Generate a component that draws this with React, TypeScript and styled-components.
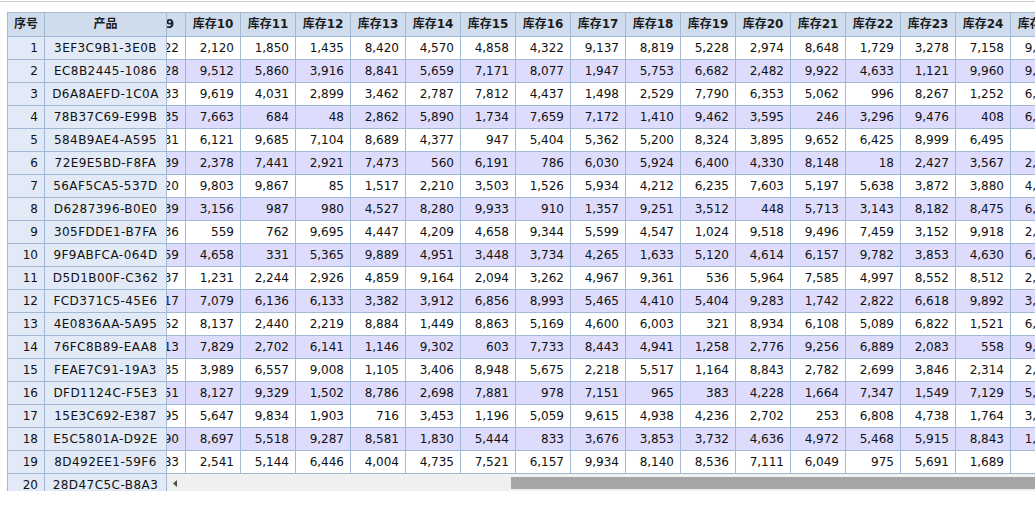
import React, { useLayoutEffect, useRef } from "react";
import styled, { createGlobalStyle } from "styled-components";

const GlobalStyle = createGlobalStyle`
  html, body {
    margin: 0;
    padding: 0;
    background: #ffffff;
    overflow: hidden;
  }
  body {
    font-family: "DejaVu Sans", Verdana, "Noto Sans CJK SC", sans-serif;
    font-size: 12px;
    color: #111;
  }
`;

const BORDER = "#a2b9d6";
const COL_W = 55;
const COL_COUNT = 30;
const SCROLL_LEFT = 476;

const codes = [
  "3EF3C9B1-3E0B", "EC8B2445-1086", "D6A8AEFD-1C0A", "78B37C69-E99B", "584B9AE4-A595",
  "72E9E5BD-F8FA", "56AF5CA5-537D", "D6287396-B0E0", "305FDDE1-B7FA", "9F9ABFCA-064D",
  "D5D1B00F-C362", "FCD371C5-45E6", "4E0836AA-5A95", "76FC8B89-EAA8", "FEAE7C91-19A3",
  "DFD1124C-F5E3", "15E3C692-E387", "E5C5801A-D92E", "8D492EE1-59F6", "28D47C5C-B8A3",
];

// 库存9 tail | 库存10..库存24 | 库存25
const visible = [
  "1,722|2,120 1,850 1,435 8,420 4,570 4,858 4,322 9,137 8,819 5,228 2,974 8,648 1,729 3,278 7,158|9,714",
  "6,328|9,512 5,860 3,916 8,841 5,659 7,171 8,077 1,947 5,753 6,682 2,482 9,922 4,633 1,121 9,960|9,205",
  "4,133|9,619 4,031 2,899 3,462 2,787 7,812 4,437 1,498 2,529 7,790 6,353 5,062 996 8,267 1,252|6,981",
  "2,835|7,663 684 48 2,862 5,890 1,734 7,659 7,172 1,410 9,462 3,595 246 3,296 9,476 408|6,540",
  "8,931|6,121 9,685 7,104 8,689 4,377 947 5,404 5,362 5,200 8,324 3,895 9,652 6,425 8,999 6,495|745",
  "5,039|2,378 7,441 2,921 7,473 560 6,191 786 6,030 5,924 6,400 4,330 8,148 18 2,427 3,567|2,318",
  "3,420|9,803 9,867 85 1,517 2,210 3,503 1,526 5,934 4,212 6,235 7,603 5,197 5,638 3,872 3,880|4,472",
  "7,239|3,156 987 980 4,527 8,280 9,933 910 1,357 9,251 3,512 448 5,713 3,143 8,182 8,475|6,027",
  "1,636|559 762 9,695 4,447 4,209 4,658 9,344 5,599 4,547 1,024 9,518 9,496 7,459 3,152 9,918|2,863",
  "9,259|4,658 331 5,365 9,889 4,951 3,448 3,734 4,265 1,633 5,120 4,614 6,157 9,782 3,853 4,630|6,194",
  "2,437|1,231 2,244 2,926 4,859 9,164 2,094 3,262 4,967 9,361 536 5,964 7,585 4,997 8,552 8,512|2,750",
  "6,817|7,079 6,136 6,133 3,382 3,912 6,856 8,993 5,465 4,410 5,404 9,283 1,742 2,822 6,618 9,892|3,416",
  "4,552|8,137 2,440 2,219 8,884 1,449 8,863 5,169 4,600 6,003 321 8,934 6,108 5,089 6,822 1,521|6,308",
  "8,113|7,829 2,702 6,141 1,146 9,302 603 7,733 8,443 4,941 1,258 2,776 9,256 6,889 2,083 558|9,642",
  "3,735|3,989 6,557 9,008 1,105 3,406 8,948 5,675 2,218 5,517 1,164 8,843 2,782 2,699 3,846 2,314|2,091",
  "5,651|8,127 9,329 1,502 8,786 2,698 7,881 978 7,151 965 383 4,228 1,664 7,347 1,549 7,129|5,537",
  "7,295|5,647 9,834 1,903 716 3,453 1,196 5,059 9,615 4,938 4,236 2,702 253 6,808 4,738 1,764|3,279",
  "2,990|8,697 5,518 9,287 8,581 1,830 5,444 833 3,676 3,853 3,732 4,636 4,972 5,468 5,915 8,843|1,604",
  "9,183|2,541 5,144 6,446 4,004 4,735 7,521 6,157 9,934 8,140 8,536 7,111 6,049 975 5,691 1,689|512",
  "4,406|3,318 7,902 2,645 5,183 6,027 1,374 8,290 2,761 6,418 3,305 9,147 4,576 1,982 7,630 5,219|8,043",
];

let seed = 7;
const rand = () => {
  seed = (seed * 1103515245 + 12345) % 2147483648;
  return seed % 10000;
};
const fmt = (n: number) => n.toLocaleString("en-US");

const rows = codes.map((code, i) => {
  const [c9, mid, c25] = visible[i].split("|");
  const cells: string[] = [];
  for (let c = 1; c <= 8; c++) cells.push(fmt(rand()));
  cells.push(c9, ...mid.split(" "), c25);
  for (let c = 26; c <= COL_COUNT; c++) cells.push(fmt(rand()));
  return { index: i + 1, code, cells };
});

const headers = Array.from({ length: COL_COUNT }, (_, i) => `库存${i + 1}`);

const Rule = styled.div`
  height: 1px;
  margin-top: 1px;
  background: #cbcbcb;
`;

const Grid = styled.div`
  display: flex;
  margin: 10px 0 0 7px;
  height: 479px;
  box-sizing: border-box;
  border-top: 1px solid ${BORDER};
  border-left: 1px solid ${BORDER};
`;

const Frozen = styled.div`
  flex: none;
  width: 159px;
  overflow: hidden;
`;

const Scroller = styled.div`
  flex: 1;
  min-width: 0;
  display: flex;
  flex-direction: column;
`;

const Viewport = styled.div`
  height: 461px;
  overflow: hidden;
`;

const Sheet = styled.div`
  width: ${COL_W * COL_COUNT}px;
`;

const Row = styled.div<{ $alt?: boolean }>`
  display: flex;
  background: ${(p) => (p.$alt ? "#dedcfd" : "#ffffff")};
`;

const Cell = styled.div<{ $w: number; $align?: string }>`
  flex: none;
  width: ${(p) => p.$w}px;
  height: 23px;
  box-sizing: border-box;
  padding: 0 6px;
  border-right: 1px solid ${BORDER};
  border-bottom: 1px solid ${BORDER};
  line-height: 22px;
  text-align: ${(p) => p.$align || "right"};
  white-space: nowrap;
  overflow: hidden;
`;

const FrozenCell = styled(Cell)`
  background: #e1eaf6;
`;

const CodeCell = styled(FrozenCell)`
  padding: 0 2px;
  letter-spacing: 0.45px;
`;

const HeadCell = styled(Cell)`
  height: 24px;
  line-height: 23px;
  padding: 0 2px;
  text-align: center;
  font-weight: bold;
  color: #1c1c1c;
  background: #cfdcee;
`;

const HScroll = styled.div`
  display: flex;
  height: 17px;
  box-sizing: border-box;
  padding: 3px 0 2px;
  background: #f0f0f0;
`;

const ArrowBtn = styled.div`
  flex: none;
  width: 16px;
  display: flex;
  align-items: center;
  justify-content: center;
`;

const Track = styled.div<{ $offset: number }>`
  flex: 1;
  padding-left: ${(p) => p.$offset}px;
  display: flex;
`;

const Thumb = styled.div`
  flex: 1;
  background: #a6a6a6;
`;

export default function App() {
  const viewRef = useRef<HTMLDivElement>(null);

  useLayoutEffect(() => {
    if (viewRef.current) viewRef.current.scrollLeft = SCROLL_LEFT;
  }, []);

  return (
    <>
      <GlobalStyle />
      <Rule />
      <Grid>
        <Frozen>
          <Row>
            <HeadCell $w={37}>序号</HeadCell>
            <HeadCell $w={122}>产品</HeadCell>
          </Row>
          {rows.map((r) => (
            <Row key={r.index}>
              <FrozenCell $w={37}>{r.index}</FrozenCell>
              <CodeCell $w={122} $align="center">
                {r.code}
              </CodeCell>
            </Row>
          ))}
        </Frozen>
        <Scroller>
          <Viewport ref={viewRef}>
            <Sheet>
              <Row>
                {headers.map((h) => (
                  <HeadCell key={h} $w={COL_W}>
                    {h}
                  </HeadCell>
                ))}
              </Row>
              {rows.map((r) => (
                <Row key={r.index} $alt={r.index % 2 === 0}>
                  {r.cells.map((v, c) => (
                    <Cell key={c} $w={COL_W}>
                      {v}
                    </Cell>
                  ))}
                </Row>
              ))}
            </Sheet>
          </Viewport>
          <HScroll>
            <ArrowBtn>
              <svg width="4" height="7" viewBox="0 0 4 7">
                <polygon points="4,0 4,7 0,3.5" fill="#4d4d4d" />
              </svg>
            </ArrowBtn>
            <Track $offset={328}>
              <Thumb />
            </Track>
          </HScroll>
        </Scroller>
      </Grid>
    </>
  );
}
